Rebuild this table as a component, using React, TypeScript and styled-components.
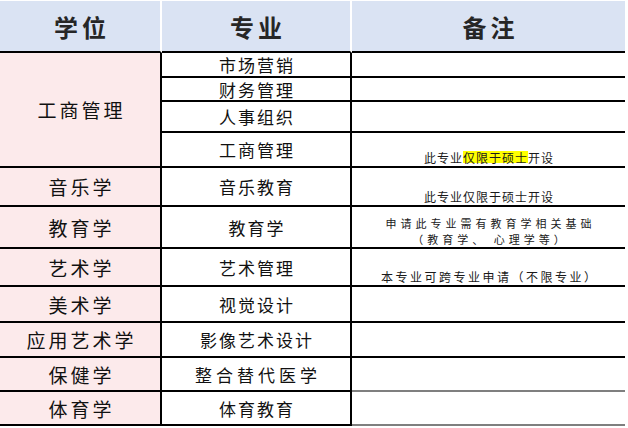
import { createGlobalStyle, styled } from 'styled-components';

type Major = {
  name: string;
  height: number;
  spacing?: number;
  note?: string[];
  mark?: string;
  noteSpacing?: number;
  grayLine?: boolean;
};

type Group = { degree: string; majors: Major[] };

const groups: Group[] = [
  {
    degree: '工商管理',
    majors: [
      { name: '市场营销', height: 25 },
      { name: '财务管理', height: 24 },
      { name: '人事组织', height: 31 },
      { name: '工商管理', height: 35, note: ['此专业仅限于硕士开设'], mark: '仅限于硕士', noteSpacing: 1 },
    ],
  },
  { degree: '音乐学', majors: [{ name: '音乐教育', height: 39, note: ['此专业仅限于硕士开设'], noteSpacing: 1 }] },
  {
    degree: '教育学',
    majors: [
      {
        name: '教育学',
        height: 42,
        note: ['申请此专业需有教育学相关基础', '（教育学、 心理学等）'],
        noteSpacing: 4,
      },
    ],
  },
  { degree: '艺术学', majors: [{ name: '艺术管理', height: 38, note: ['本专业可跨专业申请（不限专业）'], noteSpacing: 2.5 }] },
  { degree: '美术学', majors: [{ name: '视觉设计', height: 36 }] },
  { degree: '应用艺术学', majors: [{ name: '影像艺术设计', height: 35 }] },
  { degree: '保健学', majors: [{ name: '整合替代医学', height: 34, spacing: 4, grayLine: true }] },
  { degree: '体育学', majors: [{ name: '体育教育', height: 34, grayLine: true }] },
];

const HEADER_HEIGHT = 52;

const renderLine = (line: string, mark?: string) => {
  if (!mark || !line.includes(mark)) return line;
  const [before, after] = line.split(mark);
  return (
    <>
      {before}
      <Mark>{mark}</Mark>
      {after}
    </>
  );
};

const App = () => {
  const rows = [HEADER_HEIGHT, ...groups.flatMap((g) => g.majors.map((m) => m.height))]
    .map((h) => `${h}px`)
    .join(' ');

  return (
    <>
      <GlobalStyle />
      <Grid style={{ gridTemplateRows: rows }}>
        <HeadCell>学位</HeadCell>
        <HeadCell>专业</HeadCell>
        <HeadCell $last>备注</HeadCell>

        {groups.map((group) => [
          <DegreeCell key={group.degree} $span={group.majors.length}>
            {group.degree}
          </DegreeCell>,
          ...group.majors.flatMap((major) => [
            <MajorCell key={`${group.degree}-${major.name}`} $spacing={major.spacing ?? 2}>
              {major.name}
            </MajorCell>,
            <NoteCell
              key={`${group.degree}-${major.name}-note`}
              $spacing={major.noteSpacing ?? 1}
              $gray={major.grayLine}
              $compact={(major.note?.length ?? 0) > 1}
            >
              {major.note?.map((line) => (
                <NoteLine key={line}>{renderLine(line, major.mark)}</NoteLine>
              ))}
            </NoteCell>,
          ]),
        ])}
      </Grid>
    </>
  );
};

const GlobalStyle = createGlobalStyle`
  html, body {
    margin: 0;
    padding: 0;
    background: #ffffff;
  }
  body {
    font-family: "Noto Sans CJK SC", "Noto Sans", sans-serif;
    color: #111111;
  }
`;

const Grid = styled.div`
  display: grid;
  grid-template-columns: 162px 190px 273px;
  width: 625px;
  margin-top: 1px;
`;

const Cell = styled.div`
  box-sizing: border-box;
  display: flex;
  align-items: center;
  justify-content: center;
  white-space: nowrap;
  border-bottom: 2px solid #000000;
`;

const HeadCell = styled(Cell)<{ $last?: boolean }>`
  background: #dae3f3;
  border-right: ${(p) => (p.$last ? 'none' : '2px solid #ffffff')};
  font-size: 24px;
  font-weight: 700;
  color: #262626;
  letter-spacing: 4px;
  padding-left: 4px;
`;

const DegreeCell = styled(Cell)<{ $span: number }>`
  grid-row: span ${(p) => p.$span};
  background: #fceaeb;
  border-right: 2px solid #000000;
  font-size: 19px;
  letter-spacing: 3px;
  padding-left: 3px;
`;

const MajorCell = styled(Cell)<{ $spacing: number }>`
  border-right: 2px solid #000000;
  font-size: 17px;
  letter-spacing: ${(p) => p.$spacing}px;
  padding-left: ${(p) => p.$spacing}px;
`;

const NoteCell = styled(Cell)<{ $spacing: number; $gray?: boolean; $compact?: boolean }>`
  flex-direction: column;
  justify-content: flex-end;
  padding-bottom: ${(p) => (p.$compact ? 0 : 1)}px;
  padding-left: ${(p) => p.$spacing}px;
  border-bottom-color: ${(p) => (p.$gray ? '#7f7f7f' : '#000000')};
  font-size: ${(p) => (p.$compact ? 11 : 12)}px;
  line-height: ${(p) => (p.$compact ? 16 : 15)}px;
  letter-spacing: ${(p) => p.$spacing}px;
  color: #1a1a1a;
`;

const NoteLine = styled.div`
  line-height: inherit;
`;

const Mark = styled.span`
  display: inline-block;
  background: #ffff00;
  line-height: 11px;
  padding-top: 1px;
`;

export default App;
